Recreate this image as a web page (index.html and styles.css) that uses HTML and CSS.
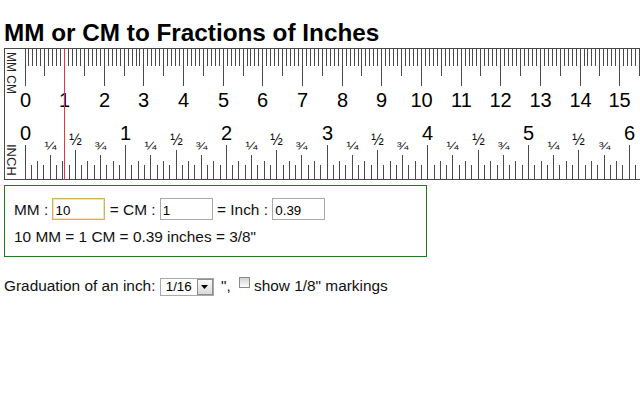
FILE: index.html
```html
<!DOCTYPE html>
<html lang="en">
<head>
<meta charset="utf-8">
<title>MM or CM to Fractions of Inches</title>
<link rel="stylesheet" href="styles.css">
</head>
<body>
<div class="page">
  <h1 class="title">MM or CM to Fractions of Inches</h1>
  <svg id="ruler" class="ruler" width="636" height="132" viewBox="0 0 636 132" xmlns="http://www.w3.org/2000/svg">
    <g class="frame">
      <rect x="0" y="0" width="636" height="1"/>
      <rect x="0" y="0" width="1" height="132"/>
      <rect x="0" y="131" width="636" height="1"/>
    </g>
    <text class="side" transform="translate(3,4) rotate(90)">MM CM</text>
    <text class="side side-inch" transform="translate(3,96) rotate(90)">INCH</text>
    <g class="ticks"></g>
    <g class="labels"></g>
    <rect class="marker" x="60" y="1" width="1" height="131"/>
  </svg>

  <div class="converter">
    <div class="conv-row">MM : <input class="field field-focus" type="text" value="10"> = CM : <input class="field" type="text" value="1"> = Inch : <input class="field" type="text" value="0.39"></div>
    <div class="conv-result">10 MM = 1 CM = 0.39 inches = 3/8"</div>
  </div>

  <div class="options">Graduation of an inch: <span class="select-wrap"><select class="select"><option>1/2</option><option>1/4</option><option>1/8</option><option selected>1/16</option><option>1/32</option></select><span class="select-btn"><svg width="7" height="4" viewBox="0 0 7 4"><path d="M0 0H7L3.5 4Z"/></svg></span></span> ", <label class="check-label"><input class="check" type="checkbox">show 1/8" markings</label></div>
</div>
<script src="script.js"></script>
</body>
</html>
```

FILE: styles.css
```css
html, body {
  margin: 0;
  padding: 0;
  background: #fff;
}

body {
  font-family: "Liberation Sans", Arial, sans-serif;
  font-size: 15.4px;
  color: #111;
  overflow: hidden;
}

.page {
  padding: 0 0 0 4px;
}

.title {
  margin: 0 0 3px 0;
  padding-top: 20px;
  font-size: 24.3px;
  line-height: 25px;
  font-weight: bold;
  color: #000;
}

.ruler {
  display: block;
  overflow: hidden;
  shape-rendering: crispEdges;
}

.frame rect,
.ticks rect {
  fill: #4a4a4a;
}

.marker {
  fill: #e8343a;
}

.side {
  font-family: "Liberation Sans", Arial, sans-serif;
  font-size: 12px;
  fill: #222;
}

.side-inch {
  font-size: 13px;
}

.num {
  font-family: "Liberation Sans", Arial, sans-serif;
  font-size: 20px;
  fill: #000;
  text-anchor: middle;
}

.frac {
  font-family: "Liberation Sans", Arial, sans-serif;
  font-size: 11.5px;
  fill: #111;
  text-anchor: middle;
}

.frac-half {
  font-size: 17px;
}

.converter {
  box-sizing: border-box;
  width: 423px;
  margin-top: 5px;
  border: 1px solid #1f7a1f;
  padding: 12px 9px 10px 9px;
}

.conv-row {
  line-height: 22px;
}

.field {
  box-sizing: border-box;
  width: 53px;
  height: 22px;
  margin: 0;
  padding: 2px 2px 0 2px;
  border: 1px solid #a9a9a9;
  font-family: "Liberation Sans", Arial, sans-serif;
  font-size: 13.33px;
  color: #000;
  background: #fff;
  outline: none;
}

.field-focus {
  border-color: #d6b15c;
  box-shadow: inset 0 0 0 1px #f4e4b8;
}

.conv-result {
  margin-top: 7px;
  line-height: 18px;
}

.options {
  margin-top: 19px;
  line-height: 20px;
}

.select-wrap {
  position: relative;
  display: inline-block;
  margin: 0 3px 0 0;
  vertical-align: baseline;
}

.select {
  appearance: none;
  -webkit-appearance: none;
  box-sizing: border-box;
  display: block;
  width: 54px;
  height: 18px;
  margin: 0;
  padding: 0 0 0 5px;
  border: 1px solid #a8a8a8;
  border-radius: 0;
  background: #fff;
  font-family: "Liberation Sans", Arial, sans-serif;
  font-size: 13.33px;
  line-height: 16px;
  color: #000;
}

.select-btn {
  position: absolute;
  top: 1px;
  right: 1px;
  box-sizing: border-box;
  width: 16px;
  height: 16px;
  border: 1px solid #8e8e8e;
  background: linear-gradient(#fbfbfb, #d9d9d9);
  display: flex;
  align-items: center;
  justify-content: center;
  pointer-events: none;
}

.select-btn svg {
  display: block;
  fill: #000;
}

.check-label {
  white-space: nowrap;
}

.check {
  appearance: none;
  -webkit-appearance: none;
  box-sizing: border-box;
  width: 11px;
  height: 11px;
  margin: 0 4px 3px 4px;
  border: 1px solid #8a8a8a;
  background: linear-gradient(#d4d4d4, #fdfdfd);
  vertical-align: baseline;
}
```

FILE: script.js
```js
(function () {
  var NS = 'http://www.w3.org/2000/svg';
  var svg = document.getElementById('ruler');
  var ticks = svg.querySelector('.ticks');
  var labels = svg.querySelector('.labels');
  var WIDTH = 636;
  var INCH = 100.7;
  var MM = INCH / 25.4;
  var X0 = 25;
  var OFF = 4;
  var LIMIT = 660;

  function rect(x, y, h) {
    var r = document.createElementNS(NS, 'rect');
    r.setAttribute('x', x);
    r.setAttribute('y', y);
    r.setAttribute('width', 1);
    r.setAttribute('height', h);
    ticks.appendChild(r);
  }

  function text(x, y, s, cls, half, len) {
    if (x + half > WIDTH) { return; }
    var t = document.createElementNS(NS, 'text');
    t.setAttribute('x', x);
    t.setAttribute('y', y);
    t.setAttribute('class', cls);
    if (len) {
      t.setAttribute('textLength', len);
      t.setAttribute('lengthAdjust', 'spacingAndGlyphs');
    }
    t.textContent = s;
    labels.appendChild(t);
  }

  var k, px, h, s;
  for (k = 0; X0 + k * MM < LIMIT; k++) {
    px = Math.floor(X0 + k * MM) - OFF;
    h = k % 10 === 0 ? 37 : (k % 5 === 0 ? 27 : 17);
    rect(px, 1, h);
    if (k % 10 === 0) {
      s = String(k / 10);
      text(px + 0.5, 59, s, 'num', s.length * 5.6);
    }
  }

  var j, y, cx, m;
  for (j = 0; X0 + j * INCH / 16 < LIMIT; j++) {
    px = Math.floor(X0 + j * INCH / 16) - OFF;
    m = j % 16;
    if (m === 0) { y = 97; }
    else if (m === 8) { y = 102; }
    else if (m % 4 === 0) { y = 107; }
    else if (m % 2 === 0) { y = 113; }
    else { y = 117; }
    rect(px, y, 131 - y);
    cx = px + 0.5;
    if (m === 0) { s = String(j / 16); text(cx, 92, s, 'num', s.length * 5.6); }
    else if (m === 4) { text(cx, 102, '\u00BC', 'frac', 6, 12); }
    else if (m === 8) { text(cx, 97, '\u00BD', 'frac frac-half', 6.5, 12.5); }
    else if (m === 12) { text(cx, 102, '\u00BE', 'frac', 6, 12); }
  }
})();
```
